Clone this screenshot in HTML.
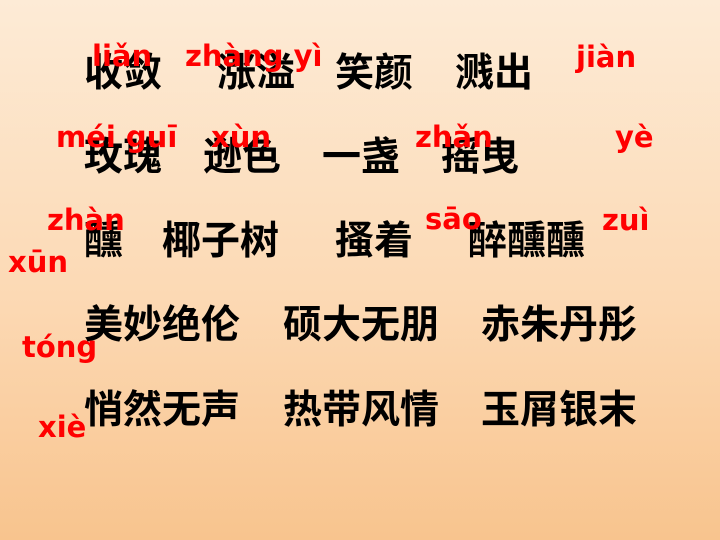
<!DOCTYPE html>
<html><head><meta charset="utf-8"><style>
html,body{margin:0;padding:0}
body{width:720px;height:540px;overflow:hidden;background:linear-gradient(#fdebd6,#fcd9b4 55%,#f8c48e)}
svg{position:absolute;left:0;top:0}
.c{font-family:"Liberation Sans","Noto Sans CJK SC",sans-serif;font-size:39px;font-weight:bold;fill:#000}
.p{font-family:"DejaVu Sans",sans-serif;font-size:29px;font-weight:bold;fill:#ff0000}
</style></head><body>
<svg width="720" height="540">
<text class="c" x="84" y="86">收敛</text>
<text class="c" x="217" y="86">涨溢</text>
<text class="c" x="335" y="86">笑颜</text>
<text class="c" x="455" y="86">溅出</text>
<text class="c" x="84" y="170">玫瑰</text>
<text class="c" x="203" y="170">逊色</text>
<text class="c" x="322" y="170">一盏</text>
<text class="c" x="441" y="170">摇曳</text>
<text class="c" x="84" y="254">醺</text>
<text class="c" x="162" y="254">椰子树</text>
<text class="c" x="335" y="254">搔着</text>
<text class="c" x="468" y="254">醉醺醺</text>
<text class="c" x="84" y="338">美妙绝伦</text>
<text class="c" x="283" y="338">硕大无朋</text>
<text class="c" x="481" y="338">赤朱丹彤</text>
<text class="c" x="84" y="423">悄然无声</text>
<text class="c" x="283" y="423">热带风情</text>
<text class="c" x="481" y="423">玉屑银末</text>

<text class="p" x="92" y="66">liǎn</text>
<text class="p" x="185" y="66">zhàng yì</text>
<text class="p" x="576" y="67">jiàn</text>
<text class="p" x="56" y="147">méi  guī</text>
<text class="p" x="211" y="147">xùn</text>
<text class="p" x="415" y="147">zhǎn</text>
<text class="p" x="615" y="147">yè</text>
<text class="p" x="47" y="230">zhàn</text>
<text class="p" x="425" y="229">sāo</text>
<text class="p" x="602" y="230">zuì</text>
<text class="p" x="8" y="272">xūn</text>
<text class="p" x="22" y="357">tóng</text>
<text class="p" x="38" y="437">xiè</text>
</svg>
</body></html>
